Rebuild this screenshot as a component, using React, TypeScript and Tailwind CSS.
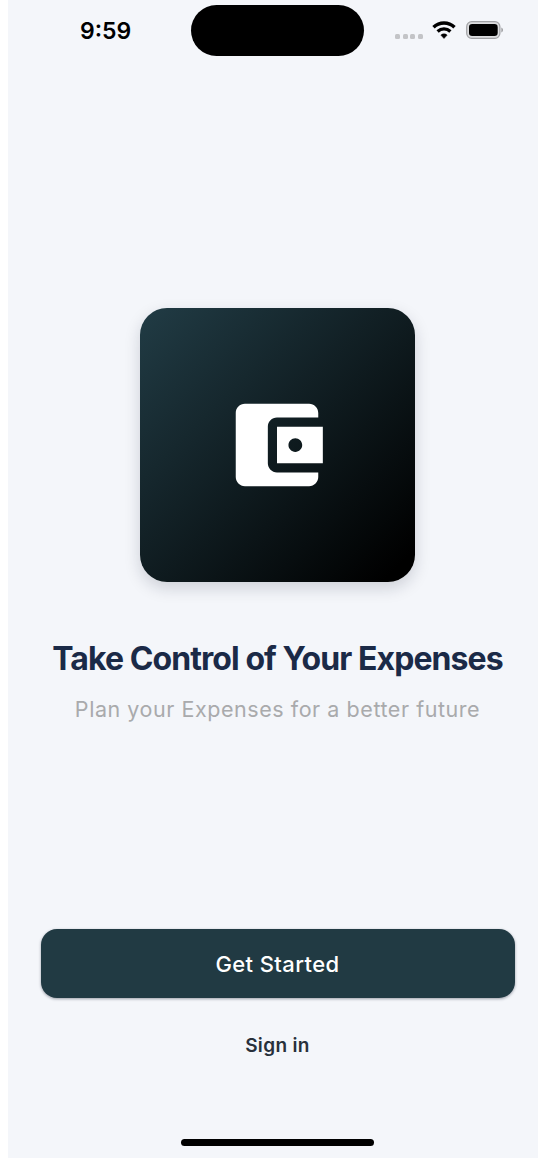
function Wifi() {
  return (
    <svg className="h-[18px] w-[24px]" viewBox="0 0 24 18" fill="none" stroke="#000">
      <path d="M1.500 6.300C7.400 .7 16.600 .7 22.500 6.300" strokeWidth="3.500" />
      <path d="M5.600 10.500C9.300 7.100 14.700 7.100 18.400 10.500" strokeWidth="3.300" />
      <path d="M12 17.600L8.800 14.100C10.600 12.300 13.400 12.300 15.200 14.100Z" fill="#000" stroke="#000" strokeWidth=".4" />
    </svg>
  );
}

function Battery() {
  return (
    <svg className="h-[18px] w-[38px]" viewBox="0 0 38 18">
      <rect x=".7" y=".7" width="33.200" height="16.600" rx="5" fill="#dcdddf" stroke="#a0a1a4" strokeWidth="1.200" />
      <rect x="3" y="3" width="28.700" height="12" rx="3.200" fill="#000" />
      <path d="M35.300 6.500C37.600 7.200 37.600 10.800 35.300 11.500Z" fill="#a0a1a4" />
    </svg>
  );
}

function StatusBar() {
  return (
    <header className="flex h-[62px] shrink-0 items-start">
      <div className="w-[183px] pt-[16px] pl-[72px] text-[23px] leading-[30px] font-semibold text-black">
        9:59
      </div>
      <div className="mt-[5px] h-[51px] w-[173px] rounded-full bg-black" />
      <div className="mt-[34px] ml-[31px] flex gap-[2.500px]">
        <span className="size-[5px] rounded-[1.500px] bg-[#c3c4c7]" />
        <span className="size-[5px] rounded-[1.500px] bg-[#c3c4c7]" />
        <span className="size-[5px] rounded-[1.500px] bg-[#c3c4c7]" />
        <span className="size-[5px] rounded-[1.500px] bg-[#c3c4c7]" />
      </div>
      <div className="mt-[21px] ml-[9px] flex gap-[10px]">
        <Wifi />
        <Battery />
      </div>
    </header>
  );
}

function WalletIcon() {
  return (
    <svg className="mr-[1.500px] size-[110px]" viewBox="0 0 24 24" fill="#fff">
      <path d="M21 18v1c0 1.100-.9 2-2 2H5c-1.110 0-2-.9-2-2V5c0-1.100.89-2 2-2h14c1.100 0 2 .9 2 2v1h-9c-1.110 0-2 .9-2 2v8c0 1.100.89 2 2 2h9zm-9-2h10V8H12v8zm4-2.500c-.83 0-1.500-.67-1.500-1.500s.67-1.500 1.500-1.500 1.500.67 1.500 1.500-.67 1.500-1.500 1.500z" />
    </svg>
  );
}

export default function App() {
  return (
    <div className="h-[1166px] w-[538px] overflow-hidden bg-white pl-[8px] font-['Inter',sans-serif]">
      <div className="flex h-[1158px] w-[539px] flex-col bg-[#f4f6fa]">
        <StatusBar />
        <main className="flex flex-col items-center pt-[246px]">
          <div className="flex h-[274px] w-[275px] items-center justify-center rounded-[27px] bg-[linear-gradient(135deg,#203a43_3%,#000_94%)] shadow-[0_6px_16px_rgba(20,25,45,0.17)]">
            <WalletIcon />
          </div>
          <h1 className="mt-[56px] text-[32px] leading-[42px] font-bold tracking-[-0.920px] whitespace-nowrap text-[#1b2a47]">
            Take Control of Your Expenses
          </h1>
          <p className="mt-[14px] text-[21.500px] leading-[30px] tracking-[0.550px] whitespace-nowrap text-[#a9aaac]">
            Plan your Expenses for a better future
          </p>
          <button className="mt-[204.500px] h-[69.500px] w-[474px] rounded-[16px] bg-[#213a43] pt-px text-[22px] leading-[30px] font-medium tracking-[0.400px] text-white shadow-[0_1px_3px_rgba(20,25,45,0.4)]">
            Get Started
          </button>
          <button className="mt-[34px] text-[19px] leading-[28px] font-semibold tracking-[0.350px] text-[#28303b]">
            Sign in
          </button>
          <div className="mt-[79px] h-[7px] w-[193px] rounded-full bg-black" />
        </main>
      </div>
    </div>
  );
}
